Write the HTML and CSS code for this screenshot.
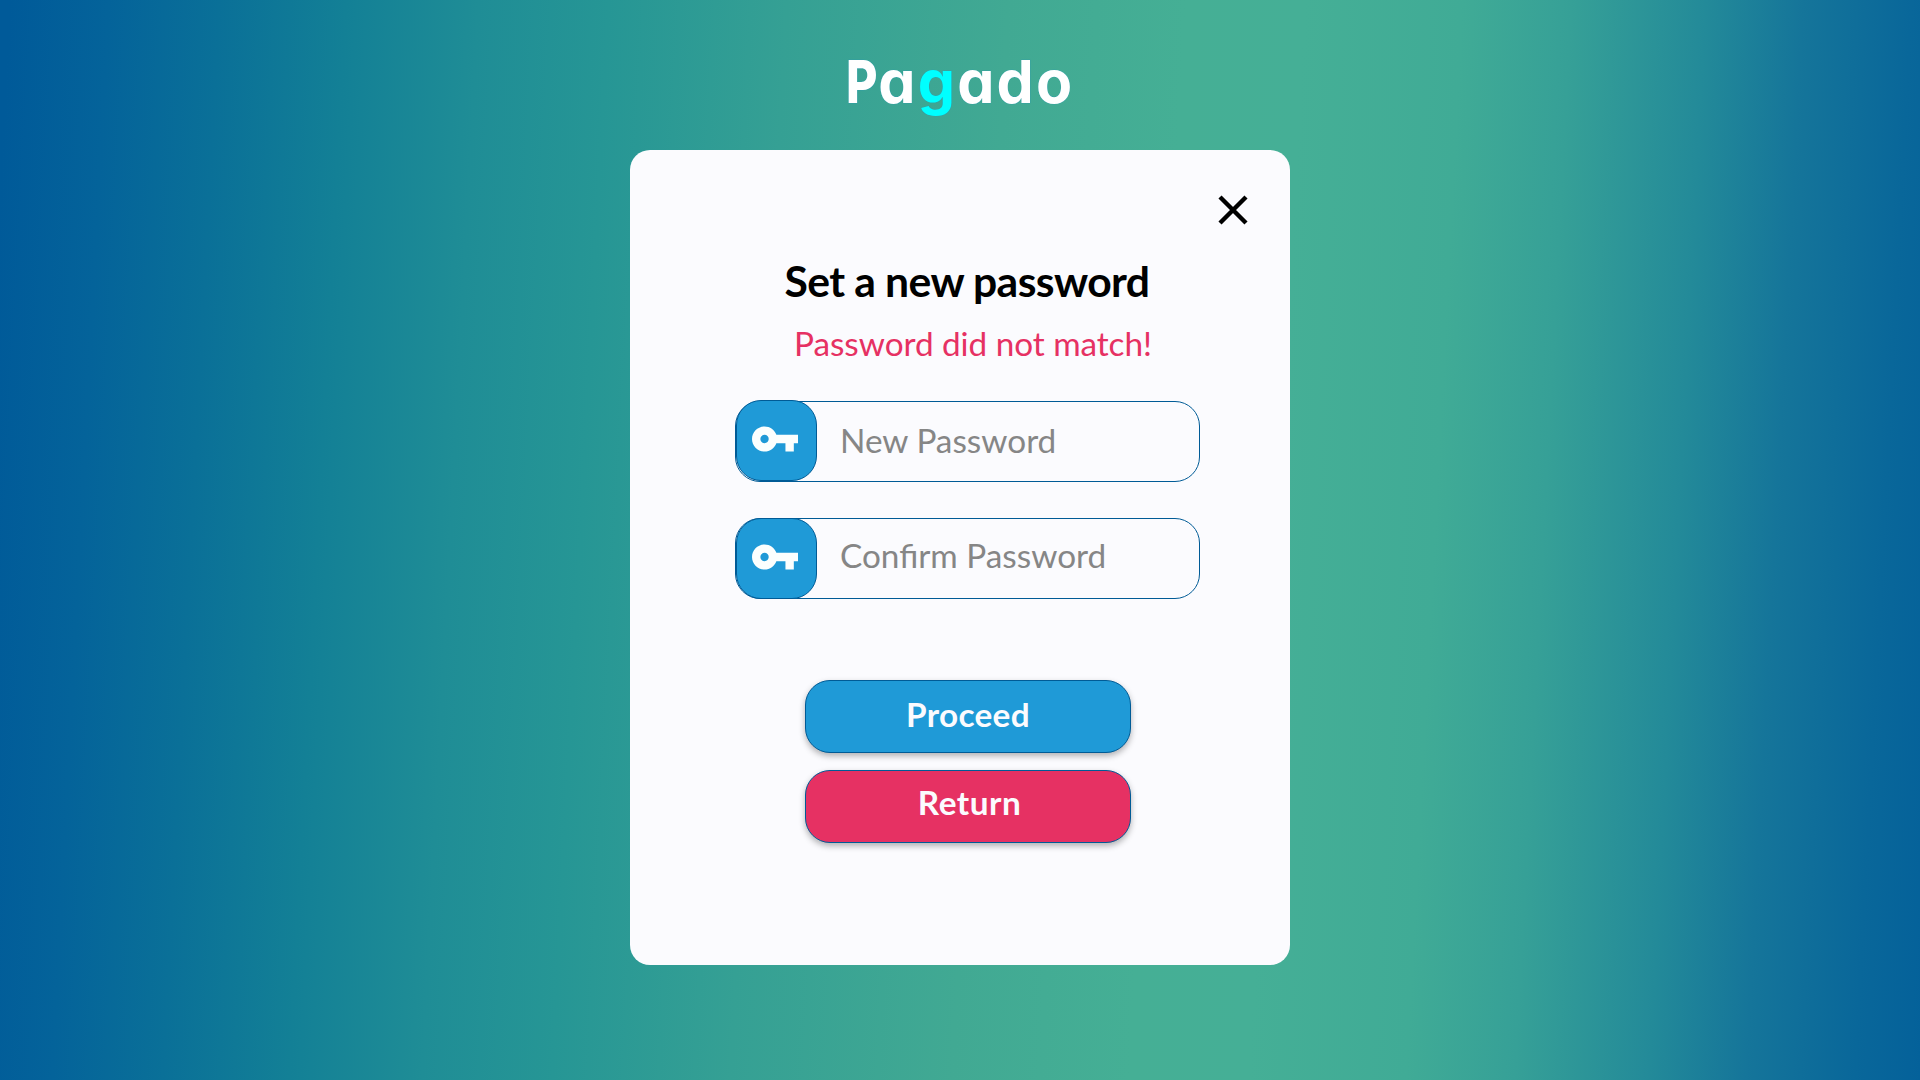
FILE: index.html
```html
<!DOCTYPE html>
<html lang="en">
<head>
<meta charset="utf-8">
<title>Pagado</title>
<link rel="stylesheet" href="styles.css">
</head>
<body>
<header class="logo"><span class="logo-initial">P</span>a<span class="logo-accent">g</span>ado</header>
<main class="card">
  <button class="close" aria-label="Close">
    <svg width="30" height="30" viewBox="0 0 30 30"><path d="M2 2 28 28M28 2 2 28" stroke="#000" stroke-width="4.4" fill="none"/></svg>
  </button>
  <h1 class="title">Set a new password</h1>
  <p class="error">Password did not match!</p>
  <div class="field field-new">
    <span class="field-icon"><svg width="46" height="26" viewBox="1 6 22 12"><path fill="#fbfffe" d="M12.65 10C11.83 7.67 9.61 6 7 6c-3.31 0-6 2.69-6 6s2.69 6 6 6c2.61 0 4.83-1.67 5.65-4H17v4h4v-4h2v-4H12.65zM7 14c-1.1 0-2-.9-2-2s.9-2 2-2 2 .9 2 2-.9 2-2 2z"/></svg></span>
    <span class="placeholder">New Password</span>
  </div>
  <div class="field field-confirm">
    <span class="field-icon"><svg width="46" height="26" viewBox="1 6 22 12"><path fill="#fbfffe" d="M12.65 10C11.83 7.67 9.61 6 7 6c-3.31 0-6 2.69-6 6s2.69 6 6 6c2.61 0 4.83-1.67 5.65-4H17v4h4v-4h2v-4H12.65zM7 14c-1.1 0-2-.9-2-2s.9-2 2-2 2 .9 2 2-.9 2-2 2z"/></svg></span>
    <span class="placeholder">Confirm Password</span>
  </div>
  <div class="actions">
    <button class="btn btn-proceed">Proceed</button>
    <button class="btn btn-return">Return</button>
  </div>
</main>
</body>
</html>
```
FILE: styles.css
```css
* { box-sizing: border-box; }
body {
  margin: 0;
  height: 1080px;
  overflow: hidden;
  display: flex;
  flex-direction: column;
  align-items: center;
  font-family: "Lato", sans-serif;
  background: linear-gradient(93deg,
    #005a99 0.5%, #04639a 5.5%, #0a7098 11.1%, #138096 17.5%, #1f8d96 24.2%,
    #269695 30.8%, #35a094 39.8%, #41a993 51%, #45af95 60%, #45af96 66%,
    #40ab96 74%, #36a097 79.5%, #238a99 86.3%, #15759a 91.2%, #09679a 96.7%, #04619a 100%);
}
.logo {
  height: 150px;
  padding: 46px 0 0;
  font: 700 59px/72px "Inter", sans-serif;
  font-feature-settings: "cv11";
  letter-spacing: 2.2px;
  color: #fff;
  -webkit-text-stroke: 0.5px #2a9bb5;
  paint-order: stroke fill;
}
.logo-initial {
  display: inline-block;
  margin-right: -8px;
  font-weight: 800;
  transform: scaleX(0.82);
  transform-origin: left;
}
.logo-accent { color: #0ff; }
.card {
  width: 660px;
  height: 815px;
  padding: 45px 0 0 16px;
  border-radius: 20px;
  background: #fbfbfe;
  display: flex;
  flex-direction: column;
  align-items: center;
}
.close {
  display: flex;
  align-self: flex-end;
  margin-right: 42px;
  padding: 0;
  border: 0;
  background: none;
}
.title {
  margin: 30px 2px 0 0;
  font-size: 42.67px;
  font-weight: 700;
  letter-spacing: -0.6px;
  line-height: 52px;
  color: #000;
}
.error {
  margin: 16px 0 0 10px;
  font-size: 33.33px;
  letter-spacing: -0.05px;
  line-height: 40px;
  color: #e63163;
}
.field {
  display: flex;
  width: 465px;
  height: 81px;
  margin-right: 1px;
  border: 1px solid #005b96;
  border-radius: 25px;
}
.field-new { margin-top: 38px; }
.field-confirm { margin-top: 36px; }
.field-icon {
  display: flex;
  align-items: center;
  width: 81px;
  height: 81px;
  margin: -1px 0 0;
  padding: 0 0 3px 15px;
  border: 1px solid #005b96;
  border-radius: 25px;
  background: #1f9ad7;
}
.field-new .field-icon { margin-top: -2px; }
.placeholder {
  padding-left: 23px;
  font-size: 33.33px;
  line-height: 76px;
  color: #868686;
}
.field-confirm .placeholder { line-height: 72px; }
.actions {
  display: flex;
  flex-direction: column;
  gap: 17px;
  margin-top: 81px;
}
.btn {
  width: 326px;
  height: 73px;
  padding: 0 0 5px;
  border: 1px solid #005b96;
  border-radius: 25px;
  font: 700 33.33px/40px "Lato", sans-serif;
  letter-spacing: 0.3px;
  color: #fbfbfe;
  box-shadow: 0 3px 6px rgba(0, 0, 0, 0.3);
}
.btn-proceed { background: #1f9ad7; }
.btn-return { padding: 0 0 9px 3px; letter-spacing: 0.5px; background: #e63163; }
```
